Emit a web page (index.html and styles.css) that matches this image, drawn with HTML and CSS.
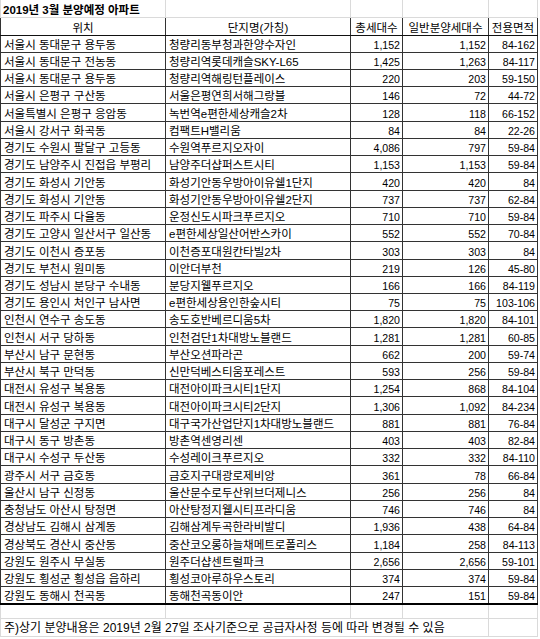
FILE: index.html
```html
<!DOCTYPE html>
<html lang="ko">
<head>
<meta charset="utf-8">
<title>2019년 3월 분양예정 아파트</title>
<link rel="stylesheet" href="styles.css">
</head>
<body>
<table class="sheet">
  <colgroup>
    <col class="c-loc"><col class="c-name"><col class="c-total"><col class="c-gen"><col class="c-area">
  </colgroup>
  <tbody>
    <tr class="title-row"><td class="title">2019년 3월 분양예정 아파트</td><td></td><td></td><td></td><td></td></tr>
    <tr class="head-row"><th>위치</th><th>단지명(가칭)</th><th>총세대수</th><th>일반분양세대수</th><th>전용면적</th></tr>
    <tr class="d"><td>서울시 동대문구 용두동</td><td>청량리동부청과한양수자인</td><td class="n">1,152</td><td class="n">1,152</td><td class="n">84-162</td></tr>
    <tr class="d"><td>서울시 동대문구 전농동</td><td>청량리역롯데캐슬SKY-L65</td><td class="n">1,425</td><td class="n">1,263</td><td class="n">84-117</td></tr>
    <tr class="d"><td>서울시 동대문구 용두동</td><td>청량리역해링턴플레이스</td><td class="n">220</td><td class="n">203</td><td class="n">59-150</td></tr>
    <tr class="d"><td>서울시 은평구 구산동</td><td>서울은평연희서해그랑블</td><td class="n">146</td><td class="n">72</td><td class="n">44-72</td></tr>
    <tr class="d"><td>서울특별시 은평구 응암동</td><td>녹번역e편한세상캐슬2차</td><td class="n">128</td><td class="n">118</td><td class="n">66-152</td></tr>
    <tr class="d"><td>서울시 강서구 화곡동</td><td>컴팩트H밸리움</td><td class="n">84</td><td class="n">84</td><td class="n">22-26</td></tr>
    <tr class="d"><td>경기도 수원시 팔달구 고등동</td><td>수원역푸르지오자이</td><td class="n">4,086</td><td class="n">797</td><td class="n">59-84</td></tr>
    <tr class="d"><td>경기도 남양주시 진접읍 부평리</td><td>남양주더샵퍼스트시티</td><td class="n">1,153</td><td class="n">1,153</td><td class="n">59-84</td></tr>
    <tr class="d"><td>경기도 화성시 기안동</td><td>화성기안동우방아이유쉘1단지</td><td class="n">420</td><td class="n">420</td><td class="n">84</td></tr>
    <tr class="d"><td>경기도 화성시 기안동</td><td>화성기안동우방아이유쉘2단지</td><td class="n">737</td><td class="n">737</td><td class="n">62-84</td></tr>
    <tr class="d"><td>경기도 파주시 다율동</td><td>운정신도시파크푸르지오</td><td class="n">710</td><td class="n">710</td><td class="n">59-84</td></tr>
    <tr class="d"><td>경기도 고양시 일산서구 일산동</td><td>e편한세상일산어반스카이</td><td class="n">552</td><td class="n">552</td><td class="n">70-84</td></tr>
    <tr class="d"><td>경기도 이천시 증포동</td><td>이천증포대원칸타빌2차</td><td class="n">303</td><td class="n">303</td><td class="n">84</td></tr>
    <tr class="d"><td>경기도 부천시 원미동</td><td>이안더부천</td><td class="n">219</td><td class="n">126</td><td class="n">45-80</td></tr>
    <tr class="d"><td>경기도 성남시 분당구 수내동</td><td>분당지웰푸르지오</td><td class="n">166</td><td class="n">166</td><td class="n">84-119</td></tr>
    <tr class="d"><td>경기도 용인시 처인구 남사면</td><td>e편한세상용인한숲시티</td><td class="n">75</td><td class="n">75</td><td class="n">103-106</td></tr>
    <tr class="d"><td>인천시 연수구 송도동</td><td>송도호반베르디움5차</td><td class="n">1,820</td><td class="n">1,820</td><td class="n">84-101</td></tr>
    <tr class="d"><td>인천시 서구 당하동</td><td>인천검단1차대방노블랜드</td><td class="n">1,281</td><td class="n">1,281</td><td class="n">60-85</td></tr>
    <tr class="d"><td>부산시 남구 문현동</td><td>부산오션파라곤</td><td class="n">662</td><td class="n">200</td><td class="n">59-74</td></tr>
    <tr class="d"><td>부산시 북구 만덕동</td><td>신만덕베스티움포레스트</td><td class="n">593</td><td class="n">256</td><td class="n">59-84</td></tr>
    <tr class="d"><td>대전시 유성구 복용동</td><td>대전아이파크시티1단지</td><td class="n">1,254</td><td class="n">868</td><td class="n">84-104</td></tr>
    <tr class="d"><td>대전시 유성구 복용동</td><td>대전아이파크시티2단지</td><td class="n">1,306</td><td class="n">1,092</td><td class="n">84-234</td></tr>
    <tr class="d"><td>대구시 달성군 구지면</td><td>대구국가산업단지1차대방노블랜드</td><td class="n">881</td><td class="n">881</td><td class="n">76-84</td></tr>
    <tr class="d"><td>대구시 동구 방촌동</td><td>방촌역센영리센</td><td class="n">403</td><td class="n">403</td><td class="n">82-84</td></tr>
    <tr class="d"><td>대구시 수성구 두산동</td><td>수성레이크푸르지오</td><td class="n">332</td><td class="n">332</td><td class="n">84-110</td></tr>
    <tr class="d"><td>광주시 서구 금호동</td><td>금호지구대광로제비앙</td><td class="n">361</td><td class="n">78</td><td class="n">66-84</td></tr>
    <tr class="d"><td>울산시 남구 신정동</td><td>울산문수로두산위브더제니스</td><td class="n">256</td><td class="n">256</td><td class="n">84</td></tr>
    <tr class="d"><td>충청남도 아산시 탕정면</td><td>아산탕정지웰시티프라디움</td><td class="n">746</td><td class="n">746</td><td class="n">84</td></tr>
    <tr class="d"><td>경상남도 김해시 삼계동</td><td>김해삼계두곡한라비발디</td><td class="n">1,936</td><td class="n">438</td><td class="n">64-84</td></tr>
    <tr class="d"><td>경상북도 경산시 중산동</td><td>중산코오롱하늘채메트로폴리스</td><td class="n">1,184</td><td class="n">258</td><td class="n">84-113</td></tr>
    <tr class="d"><td>강원도 원주시 무실동</td><td>원주더샵센트럴파크</td><td class="n">2,656</td><td class="n">2,656</td><td class="n">59-101</td></tr>
    <tr class="d"><td>강원도 횡성군 횡성읍 읍하리</td><td>횡성코아루하우스토리</td><td class="n">374</td><td class="n">374</td><td class="n">59-84</td></tr>
    <tr class="d last"><td>강원도 동해시 천곡동</td><td>동해천곡동이안</td><td class="n">247</td><td class="n">151</td><td class="n">59-84</td></tr>
    <tr class="blank-row"><td></td><td></td><td></td><td></td><td></td></tr>
    <tr class="note-row"><td colspan="4" class="note">주)상기 분양내용은 2019년 2월 27일 조사기준으로 공급자사정 등에 따라 변경될 수 있음</td><td></td></tr>
  </tbody>
</table>
</body>
</html>
```

FILE: styles.css
```css
html, body {
  margin: 0;
  padding: 0;
  background: #ffffff;
}

body {
  font-family: "Liberation Sans", "Noto Sans CJK KR", sans-serif;
  font-size: 11.5px;
  color: #000000;
}

.sheet {
  border-collapse: collapse;
  table-layout: fixed;
  width: 537px;
}

.c-loc { width: 165px; }
.c-name { width: 185px; }
.c-total { width: 52px; }
.c-gen { width: 86px; }
.c-area { width: 49px; }

.sheet td,
.sheet th {
  padding: 0 2px 1px 3px;
  line-height: 12px;
  vertical-align: bottom;
  white-space: nowrap;
  overflow: hidden;
  text-align: left;
  font-weight: normal;
}

.title-row { height: 17px; }
.head-row { height: 18px; }
.d { height: 17.24px; }
.blank-row { height: 15px; }
.note-row { height: 18px; }

.title-row td {
  border: 1px solid #dadada;
  border-top: none;
}

.title-row .title {
  font-weight: bold;
  font-size: 11.5px;
  padding-left: 2px;
}

.head-row th {
  border: 1px solid #333333;
  border-top-color: #777777;
  border-bottom-color: #111111;
  text-align: center;
  padding-left: 2px;
  padding-right: 2px;
}

.d td {
  border: 1px solid #333333;
}

.d td.n {
  font-size: 10.6px;
  text-align: right;
  padding-right: 2px;
}

.d.last td {
  border-bottom: 2px solid #000000;
}

.blank-row td {
  border: 1px solid #dadada;
  border-top: none;
}

.note-row td {
  border: 1px solid #dadada;
  padding-left: 3px;
  padding-bottom: 2px;
}

.note-row .note {
  font-size: 12px;
  overflow: visible;
}
```
